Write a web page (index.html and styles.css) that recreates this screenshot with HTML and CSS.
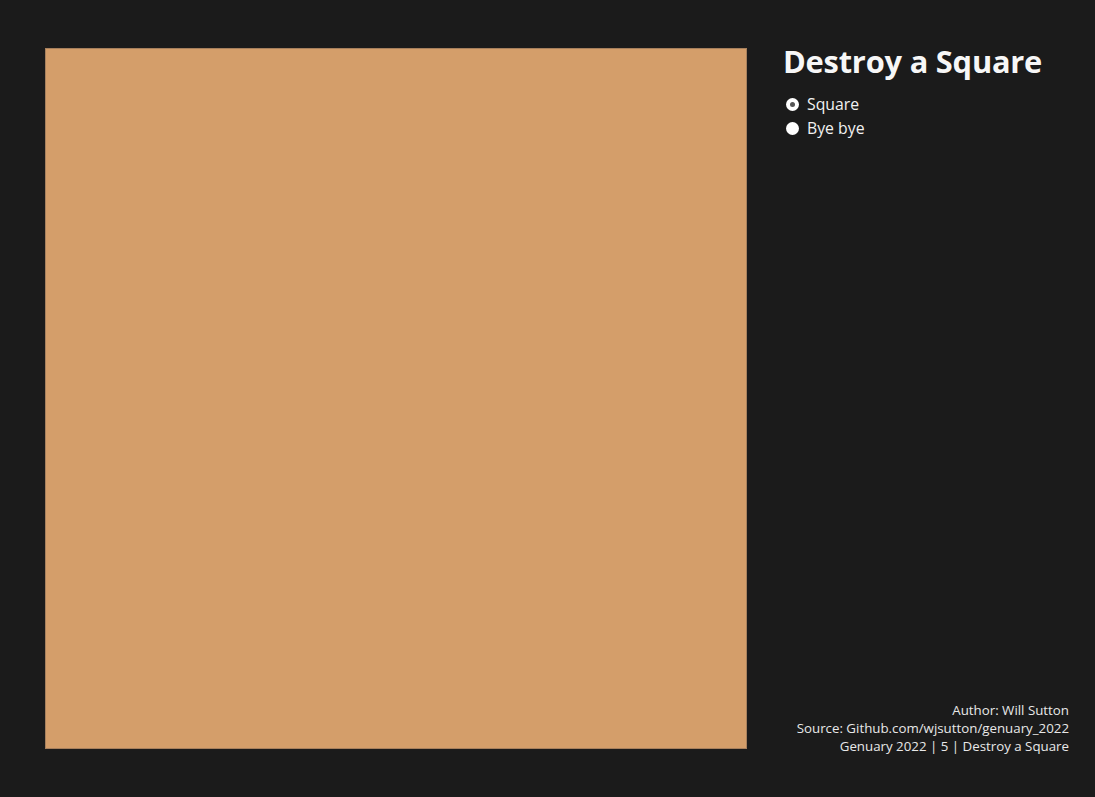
FILE: index.html
```html
<!DOCTYPE html>
<html>
<head>
<meta charset="utf-8">
<link rel="stylesheet" href="styles.css">
</head>
<body>
<div class="page">
  <div class="square"></div>
  <aside class="panel">
    <h1 class="title">Destroy a Square</h1>
    <div class="options">
      <label class="option"><span class="radio selected"></span>Square</label>
      <label class="option"><span class="radio"></span>Bye bye</label>
    </div>
    <div class="credits">
      <div>Author: Will Sutton</div>
      <div>Source: Github.com/wjsutton/genuary_2022</div>
      <div>Genuary 2022 | 5 | Destroy a Square</div>
    </div>
  </aside>
</div>
</body>
</html>
```
FILE: styles.css
```css
html, body {
  margin: 0;
  padding: 0;
  background: #1b1b1b;
  width: 1095px;
  height: 797px;
  overflow: hidden;
}
.page {
  display: flex;
  padding: 48px 26px 0 45px;
  gap: 36px;
  font-family: "Open Sans", "Noto Sans", sans-serif;
  color: #f2f2f2;
}
.square {
  width: 700px;
  height: 699px;
  background: #d49e6a;
  border: 1px solid #a7805d;
  flex: none;
}
.panel {
  flex: 1;
  display: flex;
  flex-direction: column;
  height: 701px;
}
.title {
  margin: -8px 0 0 0;
  font-size: 30.8px;
  font-weight: 700;
  line-height: 42px;
  letter-spacing: -0.2px;
  color: #f7f7f7;
}
.options {
  margin-top: 10px;
  display: flex;
  flex-direction: column;
}
.option {
  display: flex;
  align-items: center;
  gap: 8px;
  font-size: 15.8px;
  line-height: 24px;
  padding-left: 3px;
}
.radio {
  width: 13px;
  height: 13px;
  border-radius: 50%;
  background: #ffffff;
  box-sizing: border-box;
  display: flex;
  align-items: center;
  justify-content: center;
}
.radio.selected::after {
  content: "";
  width: 5px;
  height: 5px;
  border-radius: 50%;
  background: #555555;
}
.credits {
  margin-top: auto;
  text-align: right;
  font-size: 13.3px;
  line-height: 18px;
  color: #e8e8e8;
  margin-bottom: -6px;
}
```
